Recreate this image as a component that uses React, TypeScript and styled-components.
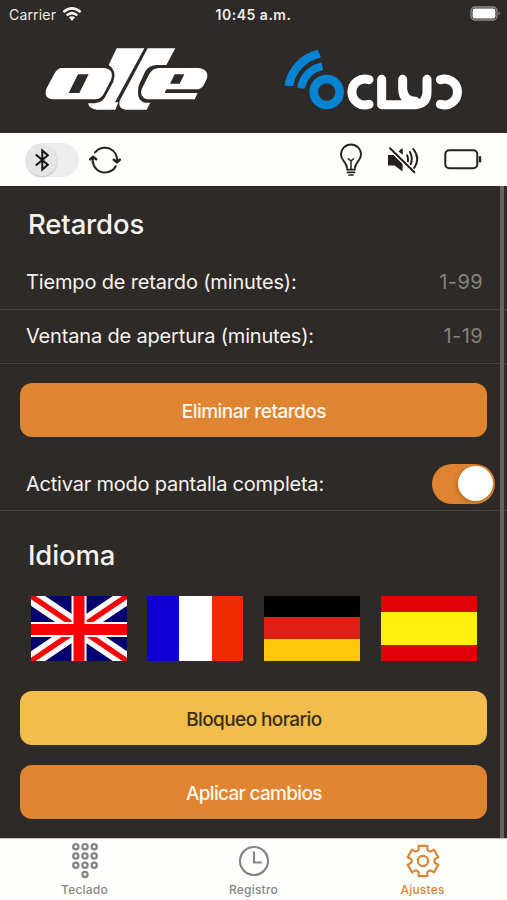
import React from 'react';
import styled, { createGlobalStyle } from 'styled-components';

const DARK = '#2e2a27';
const ORANGE = '#df8431';

const GlobalStyle = createGlobalStyle`
  * { box-sizing: border-box; }
  body { margin: 0; background: ${DARK}; }
  svg { display: block; flex: none; }
`;

const Screen = styled.div`
  width: 507px;
  height: 900px;
  display: flex;
  flex-direction: column;
  overflow: hidden;
  background: ${DARK};
  color: #f5f3f0;
  font-family: Inter, sans-serif;
`;

const StatusBar = styled.div`
  height: 28px;
  flex: none;
  display: grid;
  grid-template-columns: 1fr auto 1fr;
  align-items: center;
  padding: 0 6px 0 9px;
  font-size: 14px;
  color: #f0eeec;
`;

const Carrier = styled.div`
  display: flex;
  align-items: center;
  gap: 6px;
  letter-spacing: 0.18px;
`;

const Clock = styled.div`
  margin-left: -3px;
  font-weight: 600;
  letter-spacing: 0.5px;
`;

const StatusBattery = styled.div`
  display: flex;
  justify-content: flex-end;
  padding-bottom: 1px;
`;

const Brands = styled.header`
  height: 105px;
  flex: none;
  display: flex;
  justify-content: space-between;
  padding: 17px 41px 0 40px;
`;

const Toolbar = styled.div`
  height: 53px;
  flex: none;
  display: flex;
  align-items: center;
  background: #fefefd;
  color: #24211f;
  padding: 0 24px 0 26px;
`;

const ToolGroup = styled.div<{ $gap: number; $end?: boolean }>`
  display: flex;
  align-items: center;
  gap: ${(p) => p.$gap}px;
  margin-left: ${(p) => (p.$end ? 'auto' : '0')};
`;

const BluetoothSwitch = styled.button`
  width: 53px;
  height: 34px;
  padding: 0;
  border: 0;
  border-radius: 17px;
  background: #ededed;
`;

const BluetoothKnob = styled.span`
  display: flex;
  align-items: center;
  justify-content: center;
  width: 31px;
  height: 32px;
  border-radius: 16px;
  background: #e5e5e5;
  box-shadow: 0 1px 2px rgba(0, 0, 0, 0.22);
`;

const Content = styled.main`
  position: relative;
  height: 652px;
  flex: none;
`;

const ScrollThumb = styled.div`
  position: absolute;
  top: 0;
  right: 3px;
  width: 4px;
  height: 100%;
  background: #66635f;
`;

const Heading = styled.h2<{ $height: number; $top: number }>`
  margin: 0;
  height: ${(p) => p.$height}px;
  padding: ${(p) => p.$top}px 0 0 28px;
  font-size: 27.5px;
  line-height: 34px;
  font-weight: 500;
  letter-spacing: -0.15px;
`;

const Row = styled.div`
  height: 54px;
  display: flex;
  align-items: center;
  justify-content: space-between;
  padding: 0 24px 2px 26px;
  border-bottom: 1px solid #45423f;
`;

const SwitchRow = styled(Row)`
  margin-top: 20px;
  padding: 0 12px 0 26px;
  height: 54px;
`;

const RowLabel = styled.span<{ $spacing: number }>`
  font-size: 20px;
  letter-spacing: ${(p) => p.$spacing}px;
`;

const Placeholder = styled.span`
  font-size: 20px;
  letter-spacing: 0.4px;
  color: #85827f;
`;

const Switch = styled.button`
  width: 63px;
  height: 40px;
  border: 0;
  padding: 2px;
  border-radius: 20px;
  display: flex;
  justify-content: flex-end;
  background: ${ORANGE};
`;

const SwitchKnob = styled.span`
  width: 35px;
  height: 35px;
  border-radius: 50%;
  background: #fff;
  box-shadow: -1px 1px 4px rgba(70, 35, 0, 0.35);
`;

const Button = styled.button<{ $tone?: 'yellow'; $top: number; $spacing: number }>`
  display: block;
  width: 467px;
  height: 54px;
  margin: ${(p) => p.$top}px 0 0 20.4px;
  padding: 2px 0 0;
  border: 0;
  border-radius: 12px;
  background: ${(p) => (p.$tone === 'yellow' ? '#f2bd4b' : ORANGE)};
  color: ${(p) => (p.$tone === 'yellow' ? '#3a2d17' : '#fff7ed')};
  font: 500 19px Inter, sans-serif;
  letter-spacing: ${(p) => p.$spacing}px;
`;

const Flags = styled.div`
  display: flex;
  gap: 20.4px;
  padding-left: 30.6px;
  height: 65px;
`;

const TabBar = styled.nav`
  height: 62px;
  flex: none;
  display: grid;
  grid-template-columns: repeat(3, 1fr);
  background: #fefefd;
  border-top: 1px solid #c4c2c0;
`;

const Tab = styled.div<{ $active?: boolean }>`
  display: flex;
  flex-direction: column;
  align-items: center;
  color: ${(p) => (p.$active ? '#dc8534' : '#858585')};
`;

const TabIcon = styled.div`
  height: 43px;
  display: flex;
  align-items: center;
`;

const TabLabel = styled.span`
  font-size: 12px;
  line-height: 16px;
  font-weight: 500;
  letter-spacing: 0.2px;
`;

const WifiIcon = () => (
  <svg width="20" height="14" viewBox="0 0 20 14" fill="none" stroke="#f6f5f4" strokeWidth="2.5">
    <path d="M1.4 5.1Q10-2.3 18.6 5.1" />
    <path d="M4.7 8.4Q10 3.8 15.3 8.4" />
    <path d="M10 13.7 6.9 10.6Q10 7.9 13.1 10.6Z" fill="#f6f5f4" stroke="none" />
  </svg>
);

const ChargeIcon = () => (
  <svg width="31" height="15" viewBox="0 0 31 15">
    <rect x="1" y="1" width="26" height="13" rx="4" fill="none" stroke="#918e8b" strokeWidth="1.3" />
    <rect x="2.6" y="2.6" width="22.8" height="9.8" rx="2.2" fill="#fff" />
    <path d="M28.6 5.4Q31 7.5 28.6 9.6Z" fill="#918e8b" />
  </svg>
);

const OlleLogo = () => (
  <svg width="172" height="68" viewBox="120 135 516 204" fill="#fff" fillRule="evenodd">
    <path d="M186 204H310Q344 206 333 240L311 282Q302 298 285 298H160Q130 296 139 266L163 221Q172 204 186 204ZM234 223 206 279H238L266 223Z" />
    <path d="M350 145H433L345 307H355L346 329H291Q268 328 264 310H284Q306 308 315 292L340 245Q352 212 326 195Z" />
    <path d="M443 145H526L499 195H468Q445 197 435 215L416 257Q407 301 435 308H451L440 329H378Q352 326 359 302Z" />
    <path d="M476 204H596Q627 208 621 235L612 254Q604 268 588 268H499L494 279H593L584 298H441Q416 291 426 265L448 222Q458 204 476 204ZM524 223 510 251H539L553 223Z" />
  </svg>
);

const OclucLogo = () => (
  <svg width="186" height="70" viewBox="78 135 558 210" fill="none" strokeLinecap="round" strokeLinejoin="round">
    <g fill="#0683d3" stroke="#0683d3" strokeWidth="8">
      <path d="M96 253A127 127 0 0 1 189 154L196 170A108 108 0 0 0 114 255Z" />
      <path d="M134 260A85 85 0 0 1 200 192L203 207A71 71 0 0 0 150 262Z" />
    </g>
    <circle cx="218" cy="276" r="39" stroke="#0683d3" strokeWidth="26" />
    <g stroke="#fff" strokeWidth="27">
      <path d="M345 239A39 39 0 1 0 345 313" />
      <path d="M383 238V314H484Q519 311 519 276V238M446 238V268Q448 304 484 304" />
      <path d="M559 239A39 39 0 1 1 559 313" />
    </g>
  </svg>
);

const BluetoothIcon = () => (
  <svg width="16" height="24" viewBox="0 0 16 24" fill="none" stroke="#151413" strokeWidth="2" strokeLinejoin="miter">
    <path d="M1.8 6.5 13.8 16.7 8.3 21.6V2.4L13.8 7.3 1.8 17.5" />
  </svg>
);

const SyncIcon = () => (
  <svg width="34" height="32" viewBox="0 0 34 32" fill="none" stroke="currentColor" strokeWidth="2" strokeLinecap="round" strokeLinejoin="round">
    <path d="M7 8.4A12.4 12.4 0 0 1 29 18M27.8 22.2A12.4 12.4 0 0 1 5 13" />
    <path d="M25.8 15.8 29 18.2 31.8 15.7M2.2 15.4 5 12.8 8.2 15.2" strokeWidth="2.5" />
  </svg>
);

const BulbIcon = () => (
  <svg width="24" height="34" viewBox="0 0 24 34" fill="none" stroke="currentColor" strokeWidth="1.9" strokeLinecap="round">
    <path d="M8 25C8 19 2 18 2 11.5A10 10 0 0 1 22 11.5C22 18 16 19 16 25" />
    <path d="M12 26V17.5M9.4 15.8 12 18 14.6 15.8" strokeWidth="1.5" />
    <path d="M8 26.7H16M8.5 29.4H15.5M10 32H14" strokeWidth="1.7" />
  </svg>
);

const MutedIcon = () => (
  <svg width="32" height="28" viewBox="0 0 32 28" fill="none" stroke="currentColor" strokeWidth="2" strokeLinecap="round">
    <path d="M0 9H5.5L14.6 18V24.8H13.5L6.6 19.6H0ZM10.5 5.4 13.3 2.8H14.8V8.8Z" fill="currentColor" stroke="none" />
    <path d="M2 2.2 26.4 26.2" />
    <path d="M19 9.3Q20.4 11.8 19.9 15.3M22 6Q25.2 12 22.7 18.2M25.3 3Q32.7 12.5 26.2 22" />
  </svg>
);

const EmptyBatteryIcon = () => (
  <svg width="39" height="21" viewBox="0 0 39 21" fill="none" stroke="currentColor" strokeWidth="2">
    <rect x="1.3" y="1.3" width="32" height="18" rx="4" />
    <path d="M36 7.2V13.4" strokeWidth="2.4" />
  </svg>
);

const UnionJack = () => (
  <svg width="96" height="65" viewBox="0 0 96 65">
    <rect width="96" height="65" fill="#00006f" />
    <path d="M-3-2 99 67M99-2-3 67" stroke="#fff" strokeWidth="16" />
    <path d="M-3-2 99 67M99-2-3 67" stroke="#f90007" strokeWidth="5.5" />
    <path d="M48 0V65M0 33.5H96" stroke="#fff" strokeWidth="15" />
    <path d="M48 0V65M0 33.5H96" stroke="#f90007" strokeWidth="11" />
  </svg>
);

const FlagStripes = styled.div<{ $columns?: boolean; $sizes: string }>`
  width: 96.4px;
  height: 65px;
  display: grid;
  grid-template-columns: ${(p) => (p.$columns ? p.$sizes : '1fr')};
  grid-template-rows: ${(p) => (p.$columns ? '1fr' : p.$sizes)};
`;

const Stripe = styled.div<{ $color: string }>`
  background: ${(p) => p.$color};
`;

const stripedFlags = [
  { name: 'fr', columns: true, sizes: '32px 33px 1fr', colors: ['#1000d5', '#fff', '#ef2b00'] },
  { name: 'de', columns: false, sizes: '21px 22px 1fr', colors: ['#000', '#e02013', '#ffc708'] },
  { name: 'es', columns: false, sizes: '16px 33px 1fr', colors: ['#e00008', '#fff00c', '#e00008'] },
];

const dots = [0, 1, 2, 3, 4, 5, 6, 7, 8, 10];

const KeypadIcon = () => (
  <svg width="28" height="36" viewBox="0 0 28 36" fill="none" stroke="currentColor" strokeWidth="2.3">
    {dots.map((n) => (
      <circle key={n} cx={4.8 + (n % 3) * 9.2} cy={3.8 + Math.floor(n / 3) * 9.2} r="2.6" />
    ))}
  </svg>
);

const ClockIcon = () => (
  <svg width="32" height="32" viewBox="0 0 32 32" fill="none" stroke="currentColor" strokeWidth="2.2">
    <circle cx="16" cy="16" r="14" />
    <path d="M16 6.5V17.5H23.8" />
  </svg>
);

const gearPath = Array.from({ length: 6 }, (_, i) => {
  const at = (radius: number, degrees: number) => {
    const a = ((i * 60 + degrees - 90) * Math.PI) / 180;
    return `${(17 + radius * Math.cos(a)).toFixed(2)} ${(17 + radius * Math.sin(a)).toFixed(2)}`;
  };
  return `${i ? 'L' : 'M'}${at(12, -21)}L${at(15.8, -16)}L${at(15.8, 16)}L${at(12, 21)}Q${at(10.8, 30)} ${at(12, 39)}`;
}).join('') + 'Z';

const GearIcon = () => (
  <svg width="34" height="34" viewBox="0 0 34 34" fill="none" stroke="currentColor" strokeWidth="2.2" strokeLinejoin="round">
    <path d={gearPath} />
    <circle cx="17" cy="17" r="5.1" />
  </svg>
);

export default function App() {
  return (
    <Screen>
      <GlobalStyle />
      <StatusBar>
        <Carrier>Carrier <WifiIcon /></Carrier>
        <Clock>10:45 a.m.</Clock>
        <StatusBattery><ChargeIcon /></StatusBattery>
      </StatusBar>
      <Brands>
        <OlleLogo />
        <OclucLogo />
      </Brands>
      <Toolbar>
        <ToolGroup $gap={9}>
          <BluetoothSwitch aria-label="Bluetooth"><BluetoothKnob><BluetoothIcon /></BluetoothKnob></BluetoothSwitch>
          <SyncIcon />
        </ToolGroup>
        <ToolGroup $gap={24.5} $end>
          <BulbIcon />
          <MutedIcon />
          <EmptyBatteryIcon />
        </ToolGroup>
      </Toolbar>
      <Content>
        <Heading $height={70} $top={21}>Retardos</Heading>
        <Row>
          <RowLabel $spacing={-0.16}>Tiempo de retardo (minutes):</RowLabel>
          <Placeholder>1-99</Placeholder>
        </Row>
        <Row>
          <RowLabel $spacing={-0.17}>Ventana de apertura (minutes):</RowLabel>
          <Placeholder>1-19</Placeholder>
        </Row>
        <Button $top={19} $spacing={-0.54}>Eliminar retardos</Button>
        <SwitchRow>
          <RowLabel $spacing={-0.22}>Activar modo pantalla completa:</RowLabel>
          <Switch aria-label="Pantalla completa"><SwitchKnob /></Switch>
        </SwitchRow>
        <Heading $height={85} $top={27}>Idioma</Heading>
        <Flags>
          <UnionJack />
          {stripedFlags.map((flag) => (
            <FlagStripes key={flag.name} $columns={flag.columns} $sizes={flag.sizes}>
              {flag.colors.map((color, i) => <Stripe key={i} $color={color} />)}
            </FlagStripes>
          ))}
        </Flags>
        <Button $tone="yellow" $top={30} $spacing={-0.6}>Bloqueo horario</Button>
        <Button $top={20} $spacing={-0.7}>Aplicar cambios</Button>
        <ScrollThumb />
      </Content>
      <TabBar>
        <Tab><TabIcon><KeypadIcon /></TabIcon><TabLabel>Teclado</TabLabel></Tab>
        <Tab><TabIcon><ClockIcon /></TabIcon><TabLabel>Registro</TabLabel></Tab>
        <Tab $active><TabIcon><GearIcon /></TabIcon><TabLabel>Ajustes</TabLabel></Tab>
      </TabBar>
    </Screen>
  );
}
